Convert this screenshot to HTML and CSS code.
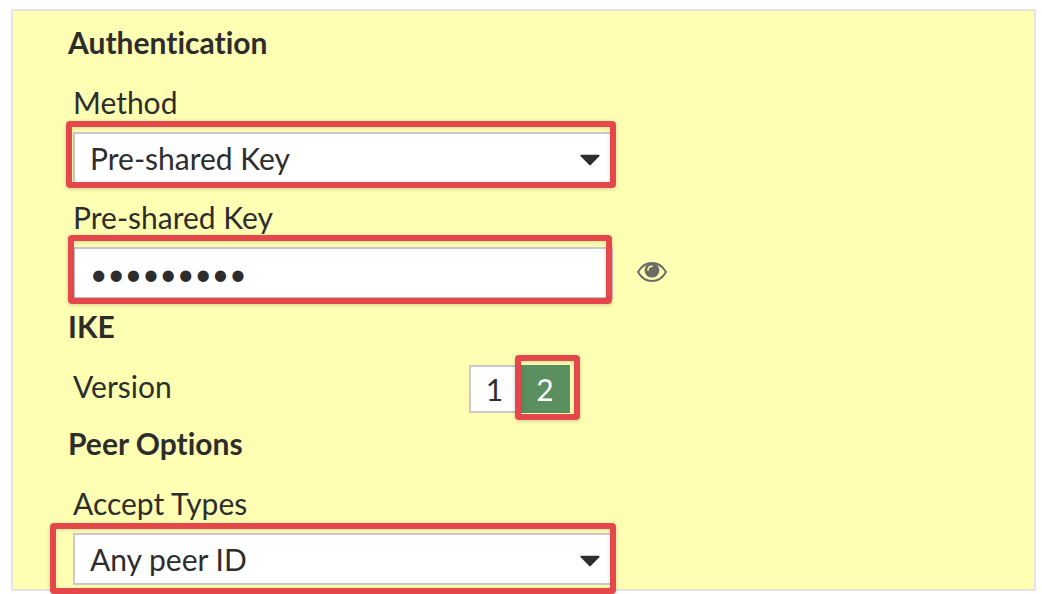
FILE: index.html
```html
<!DOCTYPE html>
<html lang="en">
<head>
<meta charset="utf-8">
<title>Authentication</title>
<link rel="stylesheet" href="styles.css">
</head>
<body>
<form class="panel">
  <section class="section">
    <h2 class="heading">Authentication</h2>
    <div class="group">
      <label class="label" for="method">Method</label>
      <div class="field marked marked-method">
        <select class="control" id="method"><option>Pre-shared Key</option></select>
        <svg class="caret" viewBox="0 0 20 12" aria-hidden="true"><path d="M1.200.8h17.600q1.400.3.500 1.500L11 10.800q-1 1-2 0L.7 2.300Q-.2 1.100 1.200.8z"/></svg>
      </div>
    </div>
    <div class="group">
      <label class="label" for="psk">Pre-shared Key</label>
      <div class="row">
        <div class="field marked marked-key">
          <input class="control" id="psk" type="password" value="secretkey">
        </div>
        <button class="reveal" type="button" aria-label="Show key">
          <svg class="eye" viewBox="0 0 30 20" aria-hidden="true">
            <path class="eye-line" d="M1 10C4.500 4 9.500 1 15 1s10.500 3 14 9c-3.500 6-8.500 9-14 9S4.500 16 1 10z"/>
            <circle class="eye-ball" cx="15" cy="8.200" r="7.400"/>
            <path class="eye-glint" d="M11 8.200c0-2.500 1.500-4 4-4"/>
          </svg>
        </button>
      </div>
    </div>
  </section>
  <section class="section section-ike">
    <h2 class="heading">IKE</h2>
    <div class="group version">
      <span class="label" id="version">Version</span>
      <div class="toggle" role="group" aria-labelledby="version">
        <button class="choice" type="button">1</button>
        <div class="marked marked-choice"><button class="choice active" type="button" aria-pressed="true">2</button></div>
      </div>
    </div>
  </section>
  <section class="section">
    <h2 class="heading">Peer Options</h2>
    <div class="group">
      <label class="label" for="peer">Accept Types</label>
      <div class="field marked marked-peer">
        <select class="control" id="peer"><option>Any peer ID</option></select>
        <svg class="caret" viewBox="0 0 20 12" aria-hidden="true"><path d="M1.200.8h17.600q1.400.3.500 1.500L11 10.800q-1 1-2 0L.7 2.300Q-.2 1.100 1.200.8z"/></svg>
      </div>
    </div>
  </section>
</form>
</body>
</html>
```
FILE: styles.css
```css
* { box-sizing: border-box; }
body {
  margin: 0;
  padding: 9px 6px 3px 11px;
  background: #fff;
  color: #2d2d2d;
  font: 30px/36px Lato, sans-serif;
  font-variant-ligatures: none;
}
.panel {
  padding: 13px 55px 4px;
  border: 2px solid #e4e4e4;
  background: #ffffb3;
}
.section { margin-bottom: 9px; }
.section-ike { margin-bottom: 12px; }
.section:last-child { margin-bottom: 0; }
.heading {
  margin: 0 0 24px;
  font-size: 30px;
  line-height: 36px;
  font-weight: 700;
}
.group { padding-left: 5px; }
.group + .group { margin-top: 15px; }
.label { display: block; }
.group > .label { margin-bottom: 12px; }
.row { display: flex; align-items: center; gap: 24px; }
.field { width: 100%; max-width: 540px; }
.marked { position: relative; }
.marked::after {
  content: "";
  position: absolute;
  border: 6px solid #e5484a;
  border-radius: 4px;
  box-shadow: 0 1px 4px rgba(0, 0, 0, .2), inset 0 1px 4px rgba(0, 0, 0, .15);
  pointer-events: none;
}
.marked-method::after { inset: -11px -3px -4px -7px; }
.marked-key::after { inset: -12px 1px -5px -5px; }
.marked-choice::after { inset: -10px -10px -7px -5px; }
.marked-peer::after { inset: -10px -3px -9px -23px; }
.control {
  display: block;
  width: 100%;
  height: 52px;
  margin: 0;
  padding: 0 15px;
  border: 2px solid #c9c9c9;
  border-radius: 0;
  background: #fff;
  color: inherit;
  font: inherit;
  font-variant-ligatures: none;
  appearance: none;
  outline: 0;
}
.caret {
  position: absolute;
  top: 22px;
  right: 13px;
  width: 20px;
  height: 12px;
  fill: #2d2d2d;
  pointer-events: none;
}
.reveal {
  display: flex;
  padding: 0 0 2px;
  border: 0;
  background: none;
}
.eye { width: 30px; height: 20px; }
.eye-line { fill: none; stroke: #6b6b65; stroke-width: 2; }
.eye-ball { fill: #6b6b65; }
.eye-glint { fill: none; stroke: #ffffb3; stroke-width: 1.500; stroke-linecap: round; }
.version {
  display: flex;
  align-items: flex-start;
  justify-content: space-between;
  max-width: 502px;
  margin-top: -3px;
}
.version > .label { margin: 0; padding-top: 3px; }
.toggle { display: flex; }
.choice {
  display: block;
  width: 51px;
  height: 48px;
  padding: 0;
  border: 2px solid #c9c9c9;
  background: #fff;
  color: inherit;
  font: inherit;
}
.active {
  width: 50px;
  border: 0;
  background: #5a8f5f;
  color: #fff;
}
```
